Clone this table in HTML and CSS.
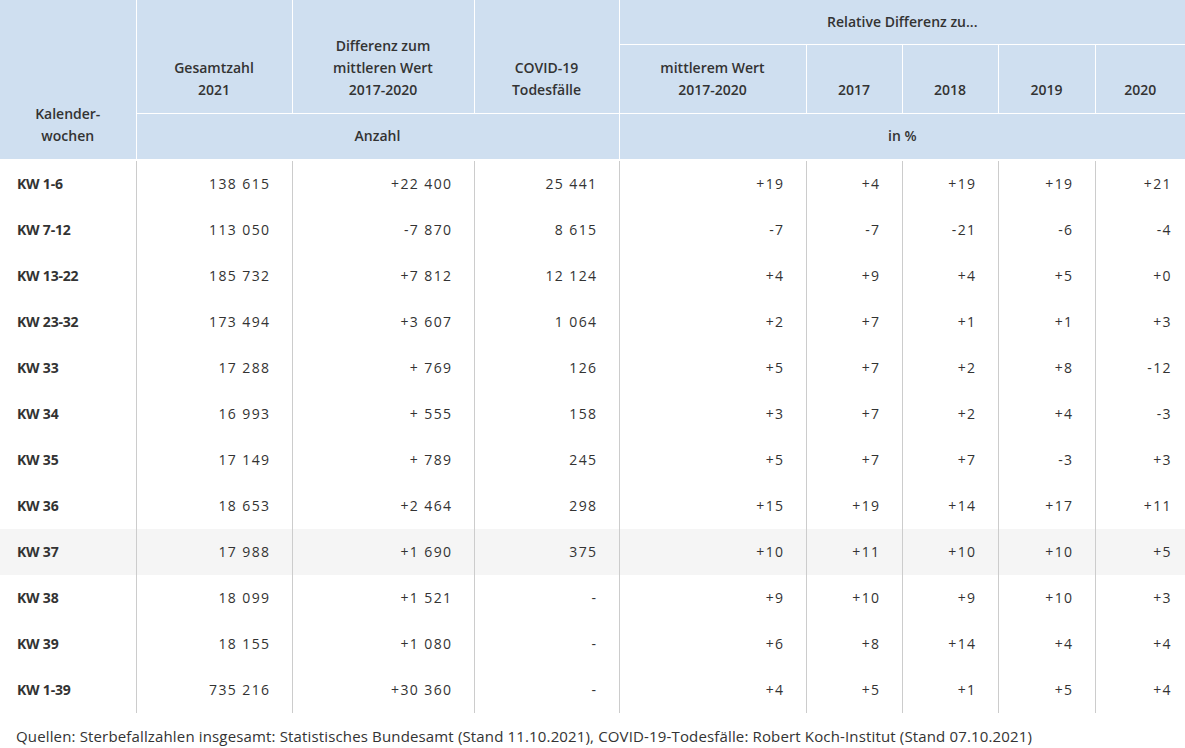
FILE: index.html
```html
<!DOCTYPE html>
<html lang="de">
<head>
<meta charset="utf-8">
<title>Sterbefallzahlen 2021</title>
<link rel="stylesheet" href="styles.css">
</head>
<body>
<table class="data">
  <colgroup>
    <col class="c1"><col class="c2"><col class="c3"><col class="c4"><col class="c5"><col class="c6"><col class="c7"><col class="c8"><col class="c9">
  </colgroup>
  <thead>
    <tr class="h1">
      <th rowspan="3" class="first">Kalender-<br>wochen</th>
      <th rowspan="2">Gesamtzahl<br>2021</th>
      <th rowspan="2">Differenz zum<br>mittleren Wert<br>2017-2020</th>
      <th rowspan="2">COVID-19<br>Todesfälle</th>
      <th colspan="5">Relative Differenz zu...</th>
    </tr>
    <tr class="h2">
      <th>mittlerem Wert<br>2017-2020</th>
      <th>2017</th>
      <th>2018</th>
      <th>2019</th>
      <th>2020</th>
    </tr>
    <tr class="h3">
      <th colspan="3">Anzahl</th>
      <th colspan="5">in %</th>
    </tr>
  </thead>
  <tbody>
    <tr><th>KW 1-6</th><td>138 615</td><td>+22 400</td><td>25 441</td><td>+19</td><td>+4</td><td>+19</td><td>+19</td><td>+21</td></tr>
    <tr><th>KW 7-12</th><td>113 050</td><td>-7 870</td><td>8 615</td><td>-7</td><td>-7</td><td>-21</td><td>-6</td><td>-4</td></tr>
    <tr><th>KW 13-22</th><td>185 732</td><td>+7 812</td><td>12 124</td><td>+4</td><td>+9</td><td>+4</td><td>+5</td><td>+0</td></tr>
    <tr><th>KW 23-32</th><td>173 494</td><td>+3 607</td><td>1 064</td><td>+2</td><td>+7</td><td>+1</td><td>+1</td><td>+3</td></tr>
    <tr><th>KW 33</th><td>17 288</td><td>+ 769</td><td>126</td><td>+5</td><td>+7</td><td>+2</td><td>+8</td><td>-12</td></tr>
    <tr><th>KW 34</th><td>16 993</td><td>+ 555</td><td>158</td><td>+3</td><td>+7</td><td>+2</td><td>+4</td><td>-3</td></tr>
    <tr><th>KW 35</th><td>17 149</td><td>+ 789</td><td>245</td><td>+5</td><td>+7</td><td>+7</td><td>-3</td><td>+3</td></tr>
    <tr><th>KW 36</th><td>18 653</td><td>+2 464</td><td>298</td><td>+15</td><td>+19</td><td>+14</td><td>+17</td><td>+11</td></tr>
    <tr class="hl"><th>KW 37</th><td>17 988</td><td>+1 690</td><td>375</td><td>+10</td><td>+11</td><td>+10</td><td>+10</td><td>+5</td></tr>
    <tr><th>KW 38</th><td>18 099</td><td>+1 521</td><td>-</td><td>+9</td><td>+10</td><td>+9</td><td>+10</td><td>+3</td></tr>
    <tr><th>KW 39</th><td>18 155</td><td>+1 080</td><td>-</td><td>+6</td><td>+8</td><td>+14</td><td>+4</td><td>+4</td></tr>
    <tr><th>KW 1-39</th><td>735 216</td><td>+30 360</td><td>-</td><td>+4</td><td>+5</td><td>+1</td><td>+5</td><td>+4</td></tr>
  </tbody>
</table>
<p class="source">Quellen: Sterbefallzahlen insgesamt: Statistisches Bundesamt (Stand 11.10.2021), COVID-19-Todesfälle: Robert Koch-Institut (Stand 07.10.2021)</p>
</body>
</html>
```
FILE: styles.css
```css
html, body {
  margin: 0;
  padding: 0;
  background: #ffffff;
}
body {
  font-family: "Open Sans", "Noto Sans", sans-serif;
  color: #333333;
  font-size: 14px;
}
.data {
  width: 1185px;
  border-collapse: collapse;
  table-layout: fixed;
}
.c1 { width: 136px; }
.c2 { width: 156px; }
.c3 { width: 182px; }
.c4 { width: 145px; }
.c5 { width: 187px; }
.c6 { width: 96px; }
.c7 { width: 96px; }
.c8 { width: 97px; }
.c9 { width: 90px; }

.data thead th {
  background: #cfdff0;
  font-weight: 600;
  font-size: 14px;
  line-height: 22px;
  text-align: center;
  vertical-align: bottom;
  padding: 0 10px 12px;
  border: 1px solid #ffffff;
  color: #333333;
}
.data thead tr:first-child th { border-top: none; }
.data thead th.first { border-left: none; }
.data thead tr th:last-child { border-right: none; }
.data .h1 { height: 44px; }
.data .h1 th[colspan] { vertical-align: middle; padding-bottom: 0; }
.data .h2 { height: 69px; }
.data .h3 { height: 47px; }
.data .h3 th { vertical-align: middle; padding-bottom: 0; }

.data tbody th,
.data tbody td {
  height: 46px;
  padding: 0 21px 0 17px;
  font-size: 14px;
  line-height: 22px;
  vertical-align: middle;
}
.data tbody th {
  text-align: left;
  font-weight: 700;
  letter-spacing: -0.2px;
}
.data tbody td {
  text-align: right;
  letter-spacing: 1.4px;
  border-left: 1px solid #cccccc;
}
.data tbody td:last-child { padding-right: 13px; }
.data tbody tr.hl { background: #f5f5f5; }
.data tbody tr:first-child th,
.data tbody tr:first-child td { border-top: 2px solid #ffffff; }

.source {
  margin: 12px 0 0 16px;
  font-size: 15px;
  letter-spacing: 0.15px;
  line-height: 22px;
  color: #333333;
}
```
